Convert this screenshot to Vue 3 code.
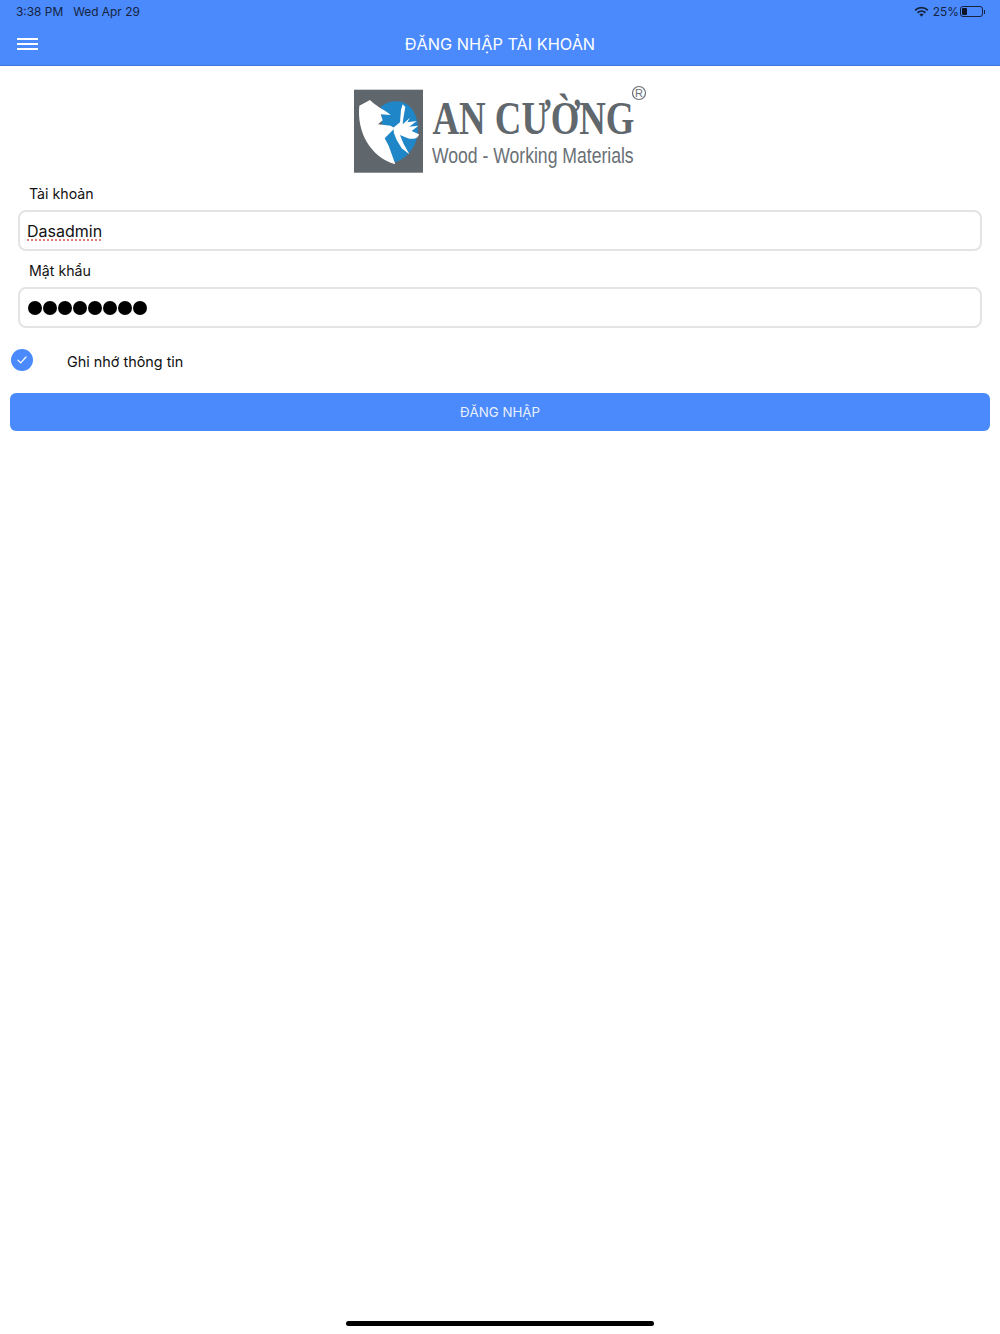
<script setup>
const dots = 8
</script>

<template>
  <div class="page">
    <header class="topbar">
      <div class="status">
        <span class="clock">3:38 PM</span>
        <span class="date">Wed Apr 29</span>
        <span class="status-right">
          <svg class="wifi" width="15" height="11" viewBox="0 0 15 11">
            <path d="M.6 3.6a10 10 0 0 1 13.8 0l-1.2 1.3a8.2 8.2 0 0 0-11.4 0z" fill="#16233f" />
            <path d="M3 6.1a6.6 6.6 0 0 1 9 0l-1.2 1.3a4.8 4.8 0 0 0-6.6 0z" fill="#16233f" />
            <path d="M5.4 8.5a3.2 3.2 0 0 1 4.2 0L7.5 10.8z" fill="#16233f" />
          </svg>
          <span class="pct">25%</span>
          <span class="battery"><span class="battery-level"></span></span>
          <span class="battery-tip"></span>
        </span>
      </div>
      <div class="navbar">
        <button class="menu" aria-label="Menu">
          <span></span><span></span><span></span>
        </button>
        <div class="title">ĐĂNG NHẬP TÀI KHOẢN</div>
      </div>
    </header>

    <div class="logo">
      <svg width="320" height="110" viewBox="0 0 320 110">
        <rect x="14" y="14.7" width="69" height="83" fill="#5f666c" />
        <g transform="translate(10 10) scale(0.3333)">
          <path d="M92 66C120 40 170 42 190 78C212 115 208 170 180 200C165 218 150 228 132 232L100 160Z" fill="#1f87c8" />
          <path d="M28 62L60 45C72 60 100 72 122 90L92 88L98 106L84 118L122 122L134 130L104 160L116 182L136 238C60 215 20 140 28 62Z" fill="#fff" />
          <path d="M130 128L150 112L153 75L158 58L166 66L160 100L158 118L180 98L172 112L200 108L178 125L205 122L185 138L207 148C205 162 185 165 170 158L150 150L160 175L178 208L155 190L140 165L132 145Z" fill="#fff" />
        </g>
        <text class="logo-name" transform="translate(92.5 58.5) scale(0.8 1)">AN CƯỜNG</text>
        <text class="logo-sub" transform="translate(92 87.5) scale(0.8 1)">Wood - Working Materials</text>
        <circle cx="299" cy="18" r="6.5" fill="none" stroke="#6a7076" stroke-width="1.2" />
        <text class="logo-reg" x="299" y="22" text-anchor="middle">R</text>
      </svg>
    </div>

    <form class="form" @submit.prevent>
      <label class="label">Tài khoản</label>
      <div class="input"><span class="typed">Dasadmin</span></div>
      <label class="label second">Mật khẩu</label>
      <div class="input">
        <span v-for="n in dots" :key="n" class="dot"></span>
      </div>

      <div class="remember">
        <span class="check">
          <svg width="10" height="8" viewBox="0 0 10 8">
            <path d="M1 4.2L3.7 6.8L9 1" fill="none" stroke="#fff" stroke-width="1.2" stroke-linecap="round" stroke-linejoin="round" />
          </svg>
        </span>
        <span class="remember-text">Ghi nhớ thông tin</span>
      </div>

      <button class="submit" type="submit">ĐĂNG NHẬP</button>
    </form>

    <div class="home-indicator"></div>
  </div>
</template>

<style>
html, body {
  margin: 0;
  background: #fff;
}
</style>

<style scoped>
.page {
  height: 1334px;
  display: flex;
  flex-direction: column;
  font-family: Inter, "Liberation Sans", sans-serif;
  color: #111;
  overflow: hidden;
}

.topbar {
  height: 66px;
  box-sizing: border-box;
  background: #4a8afc;
  border-bottom: 1px solid #3f78d8;
}

.status {
  height: 24px;
  display: flex;
  align-items: center;
  padding: 0 15px 1px 16px;
  font-size: 11.9px;
  color: #16233f;
  box-sizing: border-box;
}

.date {
  margin-left: 10px;
}

.status-right {
  margin-left: auto;
  display: flex;
  align-items: center;
}

.pct {
  margin-left: 4px;
}

.battery {
  margin-left: 1px;
  width: 23px;
  height: 11px;
  box-sizing: border-box;
  border: 1px solid #16233f;
  border-radius: 3px;
  padding: 1px;
  display: flex;
}

.battery-level {
  width: 5px;
  background: #0d1526;
  border-radius: 1px;
}

.battery-tip {
  width: 1px;
  height: 4px;
  margin-left: 1px;
  background: #16233f;
}

.navbar {
  height: 41px;
  display: flex;
  align-items: center;
  justify-content: center;
  position: relative;
}

.menu {
  position: absolute;
  left: 17px;
  top: 14px;
  width: 21px;
  padding: 0;
  border: 0;
  background: none;
  display: flex;
  flex-direction: column;
  gap: 3px;
}

.menu span {
  height: 2px;
  background: #fff;
}

.title {
  color: #fff;
  font-size: 16.3px;
  margin-top: -1px;
}

.logo {
  height: 110px;
  margin-top: 9px;
  padding-left: 340px;
}

.logo svg {
  display: block;
}

.logo-name {
  font-family: "Liberation Serif", serif;
  font-weight: 700;
  font-size: 46px;
  fill: #60676d;
}

.logo-sub {
  font-family: "Liberation Sans", sans-serif;
  font-size: 22px;
  fill: #6a7076;
}

.logo-reg {
  font-family: "Liberation Sans", sans-serif;
  font-size: 11px;
  fill: #6a7076;
}

.form {
  display: flex;
  flex-direction: column;
  padding: 0 10px;
}

.label {
  margin-left: 19px;
  height: 25px;
  line-height: 18px;
  font-size: 14.2px;
}

.label.second {
  margin-top: 11px;
}

.input {
  margin: 0 8px;
  height: 41px;
  box-sizing: border-box;
  border: 2px solid #e4e4e4;
  border-radius: 8px;
  padding: 0 7px;
  display: flex;
  align-items: center;
  font-size: 16px;
}

.typed {
  text-decoration: underline dotted #d9534f;
  text-underline-offset: 3px;
}

.dot {
  width: 14px;
  height: 14px;
  margin-left: 1px;
  border-radius: 50%;
  background: #000;
}

.remember {
  display: flex;
  align-items: center;
  height: 22px;
  margin: 21px 0 0 1px;
}

.check {
  width: 22px;
  height: 22px;
  border-radius: 50%;
  background: #4a8afc;
  display: flex;
  align-items: center;
  justify-content: center;
}

.remember-text {
  margin-left: 34px;
  margin-top: 3px;
  font-size: 14.4px;
}

.submit {
  margin-top: 22px;
  height: 38px;
  border: 0;
  border-radius: 6px;
  background: #4a8afc;
  color: #e8f0ff;
  font-family: inherit;
  font-size: 13.3px;
}

.home-indicator {
  margin: auto auto 8px;
  width: 308px;
  height: 5px;
  border-radius: 3px;
  background: #000;
}
</style>
